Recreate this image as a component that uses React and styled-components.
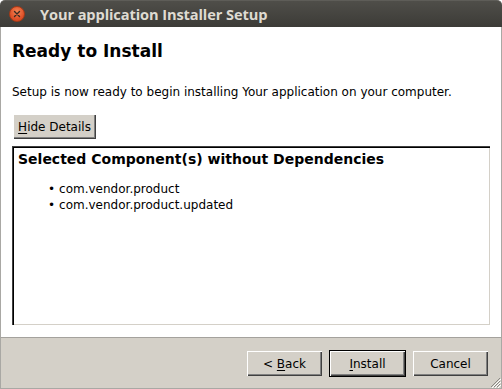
import React from "react";
import styled, { createGlobalStyle } from "styled-components";

const Global = createGlobalStyle`
  html, body { margin: 0; padding: 0; background: #ffffff; }
  body { width: 502px; height: 389px; overflow: hidden; font-family: "DejaVu Sans", sans-serif; }
  #root { width: 502px; height: 389px; }
`;

const Window = styled.div`
  display: flex;
  flex-direction: column;
  width: 502px;
  height: 389px;
  box-sizing: border-box;
`;

const TitleBar = styled.div`
  display: flex;
  align-items: center;
  height: 27px;
  box-sizing: border-box;
  padding-left: 9px;
  gap: 15px;
  background: linear-gradient(#4f4e49, #3c3b37);
  border-top: 1px solid #5e5d58;
  border-radius: 5px 5px 0 0;
`;

const CloseButton = styled.div`
  width: 16px;
  height: 16px;
  border-radius: 50%;
  box-sizing: border-box;
  border: 1px solid #a63a17;
  background: radial-gradient(circle at 50% 35%, #f48755, #e0522a 60%, #c9421c);
  display: flex;
  align-items: center;
  justify-content: center;
`;

const Title = styled.div`
  font-family: "Open Sans", sans-serif;
  font-weight: 700;
  font-size: 14.6px;
  color: #dfdbd2;
  letter-spacing: -0.1px;
  white-space: nowrap;
`;

const Content = styled.div`
  flex: 1;
  display: flex;
  flex-direction: column;
  background: #ffffff;
  border-left: 1px solid #a9a8a4;
  border-right: 1px solid #a9a8a4;
  padding: 14px 11px 12px 11px;
  min-height: 0;
`;

const Heading = styled.h1`
  margin: 0;
  font-size: 17px;
  line-height: 20px;
  font-weight: 700;
  color: #000;
`;

const Description = styled.p`
  margin: 24px 0 0 0;
  font-size: 12px;
  line-height: 15px;
  color: #000;
  white-space: nowrap;
`;

const ClassicButton = styled.button`
  box-sizing: border-box;
  height: 25px;
  width: ${(p) => p.$width || 75}px;
  padding: 0;
  margin: 0;
  font-family: "DejaVu Sans", sans-serif;
  font-size: 12px;
  color: #000;
  background: #d4d0c8;
  border: none;
  outline: ${(p) => (p.$default ? "1px solid #000" : "none")};
  outline-offset: 0;
  box-shadow: inset 1px 1px 0 #ffffff, inset -1px -1px 0 #404040, inset -2px -2px 0 #808080;
  display: flex;
  align-items: center;
  justify-content: center;
`;

const HideButtonRow = styled.div`
  margin: 14px 0 0 1px;
  display: flex;
`;

const Mnemonic = styled.span`
  text-decoration: underline;
  text-underline-offset: 2px;
`;

const DetailsBox = styled.div`
  flex: 1;
  margin-top: 7px;
  background: #ffffff;
  box-shadow: inset 1px 1px 0 #404040, inset 2px 2px 0 #000000, inset -1px -1px 0 #d4d0c8;
  padding: 5px 6px 6px 6px;
  min-height: 0;
`;

const BoxHeading = styled.h3`
  margin: 0;
  font-size: 14px;
  line-height: 17px;
  font-weight: 700;
  color: #000;
`;

const List = styled.ul`
  list-style: none;
  margin: 14px 0 0 0;
  padding: 0 0 0 30px;
`;

const Item = styled.li`
  display: flex;
  gap: 4px;
  font-size: 12px;
  line-height: 15.5px;
  color: #000;
`;

const Footer = styled.div`
  position: relative;
  display: flex;
  justify-content: flex-end;
  gap: 8px;
  height: 52px;
  box-sizing: border-box;
  padding: 13px 13px 0 0;
  background: #d4d0c8;
  border-top: 1px solid #a4a29d;
  border-left: 1px solid #a9a8a4;
  border-right: 1px solid #a9a8a4;
  border-bottom: 1px solid #a9a8a4;
`;

const Grip = styled.svg`
  position: absolute;
  right: 0;
  bottom: 0;
`;

export default function App() {
  return (
    <>
      <Global />
      <Window>
        <TitleBar>
          <CloseButton>
            <svg width="8" height="8" viewBox="0 0 8 8">
              <path d="M1.5 1.5 L6.5 6.5 M6.5 1.5 L1.5 6.5" stroke="#3b2a22" strokeWidth="1.4" strokeLinecap="round" />
            </svg>
          </CloseButton>
          <Title>Your application Installer Setup</Title>
        </TitleBar>
        <Content>
          <Heading>Ready to Install</Heading>
          <Description>
            Setup is now ready to begin installing Your application on your computer.
          </Description>
          <HideButtonRow>
            <ClassicButton $width={83}>
              <Mnemonic>H</Mnemonic>ide Details
            </ClassicButton>
          </HideButtonRow>
          <DetailsBox>
            <BoxHeading>Selected Component(s) without Dependencies</BoxHeading>
            <List>
              <Item>
                <span>•</span>
                <span>com.vendor.product</span>
              </Item>
              <Item>
                <span>•</span>
                <span>com.vendor.product.updated</span>
              </Item>
            </List>
          </DetailsBox>
        </Content>
        <Footer>
          <ClassicButton>
            &lt;&nbsp;<Mnemonic>B</Mnemonic>ack
          </ClassicButton>
          <ClassicButton $default>
            <Mnemonic>I</Mnemonic>nstall
          </ClassicButton>
          <ClassicButton>Cancel</ClassicButton>
          <Grip width="12" height="12" viewBox="0 0 12 12">
            <path d="M11 2 L2 11 M11 5 L5 11 M11 8 L8 11" stroke="#8a8883" strokeWidth="1" />
            <path d="M12 3 L3 12 M12 6 L6 12 M12 9 L9 12" stroke="#ffffff" strokeWidth="1" />
          </Grip>
        </Footer>
      </Window>
    </>
  );
}
